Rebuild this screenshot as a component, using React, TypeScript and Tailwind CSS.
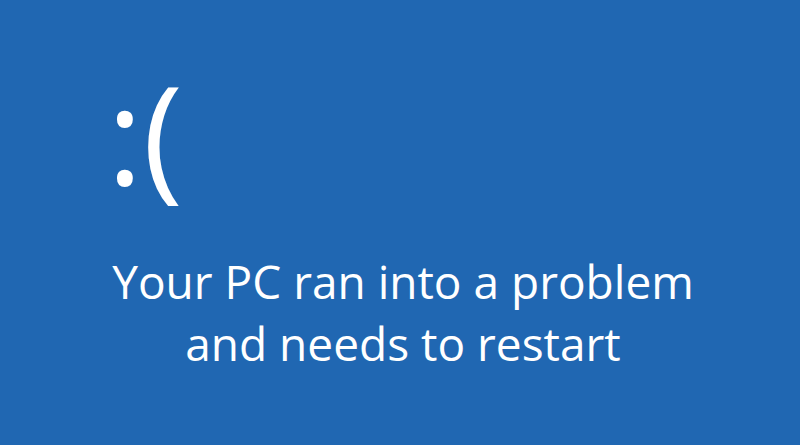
export default function App() {
  return (
    <div className="w-[800px] h-[445px] bg-[#2067b2] text-white flex flex-col overflow-hidden" style={{ fontFamily: '"Open Sans", sans-serif' }}>
      <div className="pl-[107px] pt-[53px] h-[250px]">
        <div className="text-[136px] leading-[160px]">:(</div>
      </div>
      <div className="text-center text-[46px] leading-[62px] pl-[6px]">
        <p>Your PC ran into a problem</p>
        <p>and needs to restart</p>
      </div>
    </div>
  );
}
